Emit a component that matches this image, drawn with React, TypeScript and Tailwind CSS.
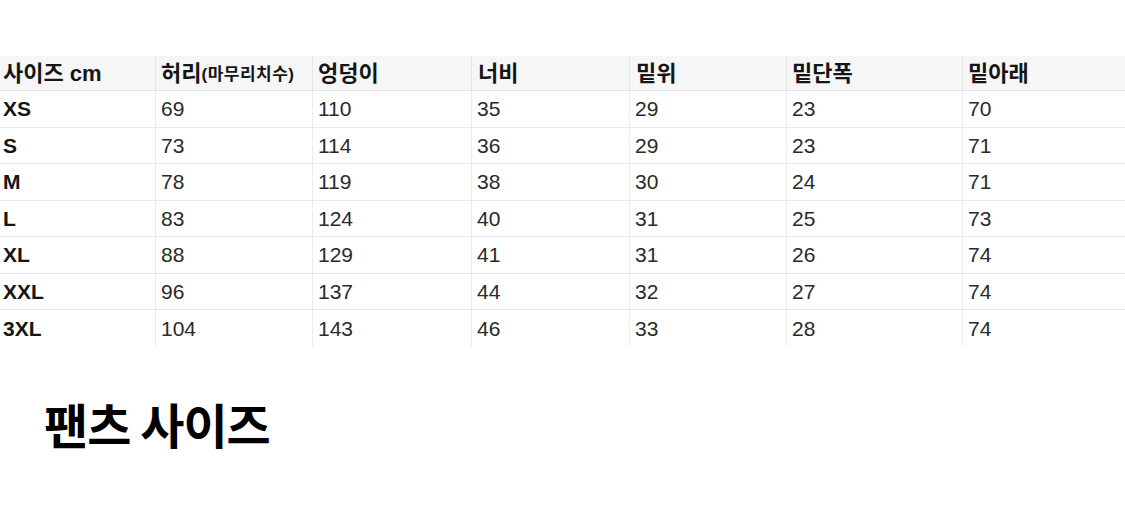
import React from "react";

const widths = ["w-[156px]", "w-[157px]", "w-[159px]", "w-[158px]", "w-[157px]", "w-[176px]", "flex-1"];

const rows: [string, string[]][] = [
  ["XS", ["69", "110", "35", "29", "23", "70"]],
  ["S", ["73", "114", "36", "29", "23", "71"]],
  ["M", ["78", "119", "38", "30", "24", "71"]],
  ["L", ["83", "124", "40", "31", "25", "73"]],
  ["XL", ["88", "129", "41", "31", "26", "74"]],
  ["XXL", ["96", "137", "44", "32", "27", "74"]],
  ["3XL", ["104", "143", "46", "33", "28", "74"]],
];

export default function App() {
  return (
    <div
      className="w-[1125px] h-[511px] bg-white text-[#1c1c1c] overflow-hidden"
      style={{ fontFamily: '"Liberation Sans", "Noto Sans CJK KR", sans-serif' }}
    >
      <div className="pt-[56px]">
        {/* header */}
        <div className="flex h-[35px] bg-[#f6f6f6] border-b border-[#e4e4e4] font-bold text-[22px] text-[#151515]">
          <div className={`${widths[0]} flex items-center pl-[3px] border-r border-[#e6e6e6]`}>사이즈 cm</div>
          <div className={`${widths[1]} flex items-center pl-[5px] border-r border-[#e6e6e6]`}>
            허리<span className="text-[17px] tracking-[0.5px] mt-[3px]">(마무리치수)</span>
          </div>
          <div className={`${widths[2]} flex items-center pl-[5px] border-r border-[#e6e6e6]`}>엉덩이</div>
          <div className={`${widths[3]} flex items-center pl-[6px] border-r border-[#e6e6e6]`}>너비</div>
          <div className={`${widths[4]} flex items-center pl-[6px] border-r border-[#e6e6e6]`}>밑위</div>
          <div className={`${widths[5]} flex items-center pl-[5px] border-r border-[#e6e6e6]`}>밑단폭</div>
          <div className={`${widths[6]} flex items-center pl-[5px]`}>밑아래</div>
        </div>
        {rows.map(([size, vals], i) => (
          <div
            key={size}
            className={`flex h-[36.5px] text-[21px] ${i < rows.length - 1 ? "border-b border-[#e8e8e8]" : ""}`}
          >
            <div className={`${widths[0]} flex items-center pl-[3px] font-bold text-[#151515] border-r border-[#ececec]`}>
              {size}
            </div>
            {vals.map((v, j) => (
              <div
                key={j}
                className={`${widths[j + 1]} flex items-center pl-[5px] text-[#2a2a2a] ${j < 5 ? "border-r border-[#ececec]" : ""}`}
              >
                {v}
              </div>
            ))}
          </div>
        ))}
      </div>
      <h1
        className="mt-[52px] ml-[44px] text-[48px] font-bold leading-none tracking-[-1px] text-black"
        style={{ fontFamily: '"Noto Sans CJK KR", sans-serif' }}
      >
        팬츠 사이즈
      </h1>
    </div>
  );
}
